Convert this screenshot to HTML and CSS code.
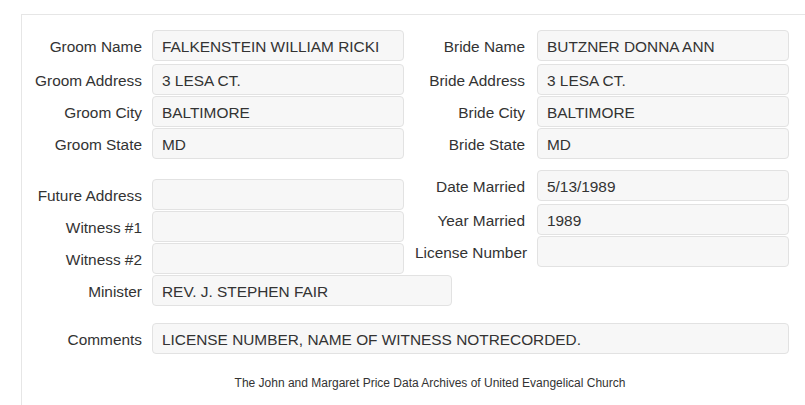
FILE: index.html
```html
<!DOCTYPE html>
<html lang="en">
<head>
  <meta charset="UTF-8">
  <meta name="viewport" content="width=device-width, initial-scale=1.0">
  <title>Marriage Record</title>
  <link rel="stylesheet" href="styles.css">
</head>
<body>
  <div class="record">

    <div class="section">
      <div class="column left">
        <div class="row first">
          <label>Groom Name</label>
          <div class="value">FALKENSTEIN WILLIAM RICKI</div>
        </div>
        <div class="row">
          <label>Groom Address</label>
          <div class="value">3 LESA CT.</div>
        </div>
        <div class="row">
          <label>Groom City</label>
          <div class="value">BALTIMORE</div>
        </div>
        <div class="row">
          <label>Groom State</label>
          <div class="value">MD</div>
        </div>
      </div>
      <div class="column right">
        <div class="row first">
          <label>Bride Name</label>
          <div class="value">BUTZNER DONNA ANN</div>
        </div>
        <div class="row">
          <label>Bride Address</label>
          <div class="value">3 LESA CT.</div>
        </div>
        <div class="row">
          <label>Bride City</label>
          <div class="value">BALTIMORE</div>
        </div>
        <div class="row">
          <label>Bride State</label>
          <div class="value">MD</div>
        </div>
      </div>
    </div>

    <div class="section second">
      <div class="column left lower">
        <div class="row">
          <label>Future Address</label>
          <div class="value"></div>
        </div>
        <div class="row">
          <label>Witness #1</label>
          <div class="value"></div>
        </div>
        <div class="row">
          <label>Witness #2</label>
          <div class="value"></div>
        </div>
        <div class="row">
          <label>Minister</label>
          <div class="value wide">REV. J. STEPHEN FAIR</div>
        </div>
      </div>
      <div class="column right">
        <div class="row first">
          <label>Date Married</label>
          <div class="value">5/13/1989</div>
        </div>
        <div class="row">
          <label>Year Married</label>
          <div class="value">1989</div>
        </div>
        <div class="row">
          <label>License Number</label>
          <div class="value"></div>
        </div>
      </div>
    </div>

    <div class="row comments">
      <label>Comments</label>
      <div class="value full">LICENSE NUMBER, NAME OF WITNESS NOTRECORDED.</div>
    </div>

    <p class="footer">The John and Margaret Price Data Archives of United Evangelical Church</p>
  </div>
</body>
</html>
```

FILE: styles.css
```css
body {
  margin: 0;
  font-family: "Liberation Sans", Arial, sans-serif;
  color: #333;
  background: #fff;
  overflow: hidden;
}

.record {
  margin: 14px 0 0 21px;
  padding: 15px 0 0 0;
  height: 391px;
  box-sizing: border-box;
  border-top: 1px solid #e6e6e6;
  border-left: 1px solid #e6e6e6;
}

.section {
  display: flex;
}

.section.second {
  margin-top: 10px;
}

.column.left {
  width: 382px;
  flex-shrink: 0;
}

.column.lower {
  padding-top: 9px;
}

.row {
  display: flex;
  margin-bottom: 1px;
}

.row.first {
  margin-bottom: 3px;
}

label {
  flex-shrink: 0;
  font-size: 15.4px;
  line-height: 20px;
  padding-top: 7px;
  white-space: nowrap;
  text-align: right;
  box-sizing: border-box;
}

.left label,
.comments label {
  width: 130px;
  padding-right: 10px;
}

.right label {
  width: 133px;
  padding-left: 11px;
  padding-right: 12px;
}

.value {
  flex-shrink: 0;
  width: 252px;
  height: 31px;
  box-sizing: border-box;
  padding: 6px 9px 0;
  font-size: 15.4px;
  line-height: 20px;
  white-space: nowrap;
  background: #f7f7f7;
  border: 1px solid #e2e2e2;
  border-radius: 4px;
  color: #333;
}

.value.wide {
  width: 300px;
}

.comments {
  margin-top: 16px;
}

.value.full {
  width: 637px;
}

.footer {
  margin: 22px 0 0 0;
  padding-left: 33px;
  text-align: center;
  font-size: 12px;
  line-height: 14px;
}
```
